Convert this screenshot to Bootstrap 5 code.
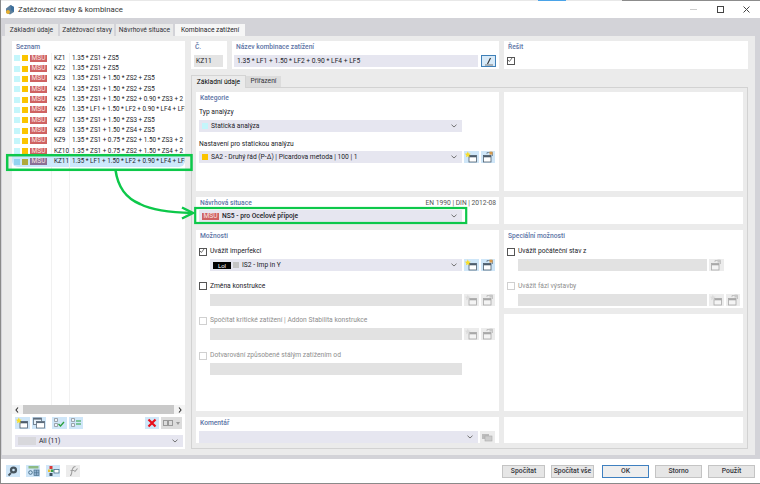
<!DOCTYPE html>
<html lang="cs">
<head>
  <meta charset="UTF-8" />
  <meta name="viewport" content="width=device-width, initial-scale=1.0" />
  <title>Zatěžovací stavy &amp; kombinace</title>
  <link href="https://cdn.jsdelivr.net/npm/bootstrap@5.3.3/dist/css/bootstrap.min.css" rel="stylesheet" />
  <style>
    html, body { margin: 0; background: #fff; overflow: hidden; }
    body, .list-group-item, .nav-link, .btn { font-family: Roboto, "Noto Sans", sans-serif; font-size: 6.7px; line-height: 9px; color: #222228; }
    .app { position: relative; width: 760px; height: 484px; overflow: hidden; border-left: 1px solid #8a8a8a; border-bottom: 1px solid #8a8a8a; }
    .top-strip { height: 1px; }
    .top-strip span:nth-child(1) { width: 537px; background: #e8e8e8; }
    .top-strip span:nth-child(2) { width: 28px; background: #4aa3e8; }
    .top-strip span:nth-child(3) { width: 56px; background: #e8e8e8; }
    .top-strip span:nth-child(4) { flex: 1; background: #8c8c8c; }
    .title-bar { height: 17px; padding-left: 4px; font-size: 7.8px; color: #333; }
    .title-bar > svg { margin-right: 3px; }
    .win-btns { margin-left: auto; }
    .win-btns svg { display: block; }
    .win-btns span { width: 26.5px; display: flex; justify-content: center; }
    .work { height: 441px; background: #d3d3d8; padding-top: 6px; }
    .nav.main-tabs { height: 12px; padding-left: 4px; gap: 2px; border: 0; flex-wrap: nowrap; }
    .main-tabs .nav-link, .sub-tabs .nav-link { height: 12px; padding: 0; margin: 0; border: 0; border-radius: 0; background: #e9e9e9; color: #33333a; text-align: center; font-size: 6.7px; line-height: 12px; }
    .main-tabs .nav-link.active { background: #f6f6f6; color: #26262c; }
    .t1 { width: 53px; } .t2 { width: 54px; } .t3 { width: 57px; } .t4 { width: 70px; }
    .tab-body { height: 419px; width: 753px; margin-left: 1px; background: #ebebeb; padding: 5px 7px 0 10px; gap: 6px; }
    .pane { background: #fff; }
    .caption { color: #5d74a6; font-weight: 500; padding: 2px 0 0 3px; height: 12px; }
    .left-pane { width: 173px; height: 408px; }
    .left-pane .caption { height: 12px; padding-left: 3px; }
    .list-area { position: relative; height: 352px; overflow: hidden; }
    .list-area::before, .list-area::after { content: ""; position: absolute; top: 0; bottom: 0; width: 1px; background: #f1f1f1; }
    .list-area::before { left: 39px; }
    .list-area::after { left: 57px; }
    .list-group-item { display: flex; align-items: center; height: 10.35px; padding: 0 0 0 2px; border: 0; border-radius: 0; background: transparent; white-space: nowrap; overflow: hidden; }
    .list-group-item.picked { background: #cde8fc; }
    .sq { width: 6px; height: 6px; flex: none; margin-right: 2px; }
    .sq-cyan { background: #c4f6fb; }
    .sq-yellow { background: #fbc400; }
    .sq-gray { background: #c4c4c4; }
    .msu { flex: none; width: 17px; height: 7px; background: #cf6262; color: #f8e4e4; font-size: 6.6px; line-height: 7px; text-align: center; }
    .picked .sq-cyan { background: #92d3f0; }
    .picked .sq-yellow { background: #aeaa3b; }
    .picked .msu { background: #8a6f96; }
    .kz { width: 17px; margin-left: 7px; flex: none; font-size: 6.4px; }
    .formula { margin-left: 1px; font-size: 6.3px; }
    .scroll-row { height: 9px; background: #f4f4f4; padding: 0 3px; }
    .scroll-row i { flex: 1; height: 9px; background: #c9c9c9; margin: 0 4px; }
    .tools { padding: 3px 3px 0 3px; height: 17px; gap: 2px; }
    .tools .gap-a { margin-left: 4px; }
    .tools .gap-b { margin-left: auto; }
    .ib { width: 14.5px; height: 12px; flex: none; background: #cfe6f8; display: flex; align-items: center; justify-content: center; color: #4c5c6c; --star: #f8de2a; --corner: #d89a4a; --body: #fff; }
    .ib.off { background: #ececec; color: #a8a8a8; --star: #dcdcdc; --corner: #c8c8c8; --body: #f4f4f4; }
    .ib.wide { width: 21px; background: #dcdcdc; gap: 3px; }
    .all-row { margin: 4px 2px 0 3px; }
    .fld { height: 12px; background: #e6e6f0; display: flex; align-items: center; padding-left: 3px; flex: none; color: #222228; position: relative; }
    .fld .chev { position: absolute; right: 5px; top: 4px; }
    .fld.off { background: #e2e2e2; }
    .all-box { width: 18px; height: 8px; background: #d8d8dc; margin-right: 3px; }
    .right-col { width: 557px; }
    .head-row { gap: 5px; height: 28px; margin-bottom: 6px; }
    .nr { width: 36px; } .nm { width: 267px; } .rs { width: 244px; }
    .nr .fld { width: 29px; margin-left: 3px; background: #e4e4e4; padding-left: 2px; }
    .nm .fld { width: 244px; margin-left: 2px; padding-left: 3px; }
    .field-row { display: flex; gap: 2px; margin-top: 2px; }
    .edit-btn { width: 15px; height: 12px; background: #d8eaf8; border: 1px solid #3f80b8; display: flex; align-items: center; justify-content: center; margin-left: 1px; }
    .nav.sub-tabs { height: 12px; border: 0; flex-wrap: nowrap; }
    .sub-tabs .nav-link { background: #dcdcdc; height: 11px; margin-top: 1px; line-height: 11px; width: 35px; }
    .sub-tabs .nav-link.active { background: #ebebeb; height: 13px; margin-top: 0; width: 55px; line-height: 12px; border: 1px solid #d4d4d4; border-bottom: 0; }
    .sub-body { height: 362px; border: 1px solid #d2d2d2; padding: 4px; gap: 5px; }
    .col-l { width: 303px; gap: 6px; }
    .col-r { width: 239px; gap: 6px; }
    .h99 { height: 99px; } .h27 { height: 27px; } .h181 { height: 181px; } .h26 { height: 26px; }
    .h78 { height: 78px; } .h97 { height: 97px; }
    .pane .caption { padding-left: 4px; }
    .lbl { padding-left: 3px; height: 9px; }
    .w263 { width: 263px; margin-left: 3px; }
    .w252 { width: 252px; }
    .w189 { width: 189px; }
    .w279 { width: 279px; margin-left: 3px; }
    .sp-a { margin-top: 4px; }
    .sp-b { margin-top: 8px; }
    .type-box { margin-top: 3px; }
    .sit-box { border-bottom: 1px solid #7b6fb0; height: 13px; padding-left: 3px; margin-top: 1px; }
    .sit-box .msu { margin-right: 3px; }
    .sit-box .msu + span { font-weight: 500; }
    .norm { margin-left: auto; padding: 2px 3px 0 0; color: #555; }
    .chk { width: 8px; height: 8px; border: 1px solid #555; background: #fff; flex: none; display: block; }
    .chk svg { display: block; }
    .chk.off { border-color: #d0d0d0; }
    .opt { display: flex; align-items: center; height: 9px; padding-left: 3px; gap: 3px; }
    .opt.dim { color: #8e8e8e; }
    .opt-fields { display: flex; gap: 2px; padding-left: 14px; margin-top: 3px; }
    .block { height: 34.7px; }
    .blocks { margin-top: 5px; }
    .lol { width: 18px; height: 7px; background: #000; color: #fff; font-size: 6px; line-height: 7px; text-align: center; margin-right: 2px; }
    .fld .sq { margin-right: 3px; }
    .solve { padding: 4px 0 0 3px; }
    .foot { height: 24px; background: #fff; padding: 6px 5px 0 5px; gap: 6px; }
    .foot .ib { width: 14px; }
    .foot .acts { margin-left: auto; gap: 6px; }
    .btn.act { height: 13px; padding: 0; border: 1px solid #c4c4c4; border-radius: 0; background: #e6e6e6; color: #33333a; font-size: 6.8px; line-height: 11px; font-weight: 500; }
    .btn.act.w42 { width: 43px; }
    .btn.act.w47 { width: 47px; }
    .btn.act.okb { border: 1px solid #3f80c0; background: #eeeeee; margin-left: 2px; }
    .overlay { position: absolute; left: -1px; top: 0; pointer-events: none; }
  </style>
</head>
<body>
  <svg width="0" height="0" class="d-block position-absolute">
    <symbol id="i-new" viewBox="0 0 14 12">
      <rect x="5" y="4.500" width="7.500" height="6.500" fill="var(--body)" stroke="currentColor" stroke-width=".8"/>
      <rect x="5" y="4.500" width="7.500" height="1.800" fill="currentColor"/>
      <path d="M3.800 .6l.9 1.900 2 .3-1.500 1.400.4 2-1.800-1-1.800 1 .4-2L.9 2.800l2-.3z" fill="var(--star)"/>
    </symbol>
    <symbol id="i-edit" viewBox="0 0 14 12">
      <rect x="2.500" y="4.500" width="7.500" height="6.500" fill="var(--body)" stroke="currentColor" stroke-width=".8"/>
      <rect x="2.500" y="4.500" width="7.500" height="1.800" fill="currentColor"/>
      <path d="M6 3V1.500h5.500V5" fill="none" stroke="currentColor" stroke-width=".6"/>
      <rect x="8.500" y=".6" width="3" height="3" fill="var(--corner)"/>
    </symbol>
    <symbol id="i-copy" viewBox="0 0 14 12">
      <rect x="1.500" y="1" width="8" height="6.500" fill="#e8f2fa" stroke="#5c6c7c" stroke-width=".8"/>
      <rect x="1.500" y="1" width="8" height="1.600" fill="#5c6c7c"/>
      <rect x="4.500" y="4.500" width="8" height="6.500" fill="#fff" stroke="#5c6c7c" stroke-width=".8"/>
      <rect x="4.500" y="4.500" width="8" height="1.600" fill="#5c6c7c"/>
    </symbol>
    <symbol id="i-chev" viewBox="0 0 6 4">
      <path d="M.5 .7L3 3l2.500-2.300" fill="none" stroke="#666" stroke-width=".9"/>
    </symbol>
    <symbol id="i-tick" viewBox="0 0 8 8">
      <path d="M1.300 3.800L3.200 6 6.800 1.200" fill="none" stroke="#444" stroke-width="1"/>
    </symbol>
  </svg>

  <div class="app d-flex flex-column">
    <div class="top-strip d-flex"><span></span><span></span><span></span><span></span></div>
    <div class="title-bar d-flex align-items-center">
      <svg width="10" height="11" viewBox="0 0 10 11">
        <path d="M1 4.500L5.500 1 9 3v5l-4 2.500-4-2z" fill="#5d7f9c"/>
        <path d="M5.500 1L9 3v5L6 6z" fill="#3c6f9c"/>
        <circle cx="3" cy="8" r="2" fill="#e8b030"/>
      </svg>
      <span>Zatěžovací stavy &amp; kombinace</span>
      <div class="win-btns d-flex align-items-center">
        <span><svg width="7" height="7" viewBox="0 0 7 7"><path d="M0 3.500h7" stroke="#ccc"/></svg></span>
        <span><svg width="7" height="7" viewBox="0 0 7 7"><rect x=".5" y=".5" width="6" height="6" fill="none" stroke="#444"/></svg></span>
        <span><svg width="7" height="7" viewBox="0 0 7 7"><path d="M.5 .5l6 6M6.500 .5l-6 6" stroke="#444"/></svg></span>
      </div>
    </div>

    <div class="work">
      <ul class="nav nav-tabs main-tabs">
        <li class="nav-item"><a class="nav-link t1" href="#">Základní údaje</a></li>
        <li class="nav-item"><a class="nav-link t2" href="#">Zatěžovací stavy</a></li>
        <li class="nav-item"><a class="nav-link t3" href="#">Návrhové situace</a></li>
        <li class="nav-item"><a class="nav-link t4 active" href="#">Kombinace zatížení</a></li>
      </ul>
      <div class="tab-body d-flex">
        <div class="pane left-pane d-flex flex-column">
          <div class="caption">Seznam</div>
          <div class="list-area"><ul class="list-group" id="comboList"></ul></div>
          <div class="scroll-row d-flex align-items-center">
            <svg width="4" height="6" viewBox="0 0 4 6"><path d="M3 .5L1 3l2 2.500" fill="none" stroke="#333" stroke-width="1.100"/></svg>
            <i></i>
            <svg width="4" height="6" viewBox="0 0 4 6"><path d="M1 .5L3 3 1 5.500" fill="none" stroke="#333" stroke-width="1.100"/></svg>
          </div>
          <div class="tools d-flex">
            <span class="ib"><svg width="14" height="12"><use href="#i-new"/></svg></span>
            <span class="ib"><svg width="14" height="12"><use href="#i-copy"/></svg></span>
            <span class="ib gap-a">
              <svg width="14" height="12" viewBox="0 0 14 12"><path d="M2.500 1.500h3v3h-3zM2.500 6.500h3v3h-3z" fill="#eef4f8" stroke="#8a929a" stroke-width=".8"/><path d="M6.500 7l2 2 3.500-4" fill="none" stroke="#2aa03c" stroke-width="1.300"/></svg>
            </span>
            <span class="ib">
              <svg width="14" height="12" viewBox="0 0 14 12"><path d="M2.500 1.500h3v3h-3zM2.500 6.500h3v3h-3z" fill="#eef4f8" stroke="#8a929a" stroke-width=".8"/><path d="M7 4h5M7 7h5" stroke="#2aa03c" stroke-width="1.200"/></svg>
            </span>
            <span class="ib gap-b">
              <svg width="10" height="10" viewBox="0 0 10 10"><path d="M1.500 1.500l7 7M8.500 1.500l-7 7" stroke="#e8101c" stroke-width="2.200"/></svg>
            </span>
            <span class="ib wide">
              <svg width="10" height="6" viewBox="0 0 10 6"><rect x=".5" y=".5" width="4" height="5" fill="none" stroke="#999"/><rect x="5.500" y=".5" width="4" height="5" fill="none" stroke="#999"/></svg>
              <svg width="4" height="3" viewBox="0 0 4 3"><path d="M0 0h4L2 3z" fill="#999"/></svg>
            </span>
          </div>
          <div class="fld all-row">
            <span class="all-box"></span><span>All (11)</span>
            <svg class="chev" width="6" height="4"><use href="#i-chev"/></svg>
          </div>
        </div>

        <div class="right-col">
          <div class="head-row d-flex">
            <div class="pane nr">
              <div class="caption">Č.</div>
              <div class="field-row"><div class="fld">KZ11</div></div>
            </div>
            <div class="pane nm">
              <div class="caption">Název kombinace zatížení</div>
              <div class="field-row">
                <div class="fld">1.35 * LF1 + 1.50 * LF2 + 0.90 * LF4 + LF5</div>
                <span class="edit-btn"><svg width="10" height="9" viewBox="0 0 10 9"><path d="M1 8h8" stroke="#777"/><path d="M3.500 7L6.500 1" stroke="#333" stroke-width="1.100"/></svg></span>
              </div>
            </div>
            <div class="pane rs">
              <div class="caption">Řešit</div>
              <div class="solve"><span class="chk"><svg width="6" height="6" viewBox="1 1 6 6"><use href="#i-tick"/></svg></span></div>
            </div>
          </div>

          <ul class="nav nav-tabs sub-tabs">
            <li class="nav-item"><a class="nav-link active" href="#">Základní údaje</a></li>
            <li class="nav-item"><a class="nav-link" href="#">Přiřazení</a></li>
          </ul>
          <div class="sub-body d-flex">
            <div class="col-l d-flex flex-column">
              <div class="pane h99">
                <div class="caption">Kategorie</div>
                <div class="lbl sp-a">Typ analýzy</div>
                <div class="fld w263 type-box"><span class="sq sq-cyan"></span>Statická analýza<svg class="chev" width="6" height="4"><use href="#i-chev"/></svg></div>
                <div class="lbl sp-b">Nastavení pro statickou analýzu</div>
                <div class="field-row">
                  <div class="fld w263"><span class="sq sq-yellow"></span>SA2 - Druhý řád (P-Δ) | Picardova metoda | 100 | 1<svg class="chev" width="6" height="4"><use href="#i-chev"/></svg></div>
                  <span class="ib"><svg width="14" height="12"><use href="#i-new"/></svg></span>
                  <span class="ib"><svg width="14" height="12"><use href="#i-edit"/></svg></span>
                </div>
              </div>
              <div class="pane h27 d-flex flex-column">
                <div class="d-flex">
                  <div class="caption">Návrhová situace</div>
                  <div class="norm">EN 1990 | DIN | 2012-08</div>
                </div>
                <div class="fld w263 sit-box"><span class="msu">MSÚ</span><span>NS5 - pro Ocelové přípoje</span><svg class="chev" width="6" height="4"><use href="#i-chev"/></svg></div>
              </div>
              <div class="pane h181">
                <div class="caption">Možnosti</div>
                <div class="blocks">
                  <div class="block">
                    <div class="opt"><span class="chk"><svg width="6" height="6" viewBox="1 1 6 6"><use href="#i-tick"/></svg></span>Uvážit imperfekci</div>
                    <div class="opt-fields">
                      <div class="fld w252"><span class="lol">Lol</span><span class="sq sq-gray"></span>IS2 - Imp in Y<svg class="chev" width="6" height="4"><use href="#i-chev"/></svg></div>
                      <span class="ib"><svg width="14" height="12"><use href="#i-new"/></svg></span>
                      <span class="ib"><svg width="14" height="12"><use href="#i-edit"/></svg></span>
                    </div>
                  </div>
                  <div class="block">
                    <div class="opt"><span class="chk"></span>Změna konstrukce</div>
                    <div class="opt-fields">
                      <div class="fld off w252"></div>
                      <span class="ib off"><svg width="14" height="12"><use href="#i-new"/></svg></span>
                      <span class="ib off"><svg width="14" height="12"><use href="#i-edit"/></svg></span>
                    </div>
                  </div>
                  <div class="block">
                    <div class="opt dim"><span class="chk off"></span>Spočítat kritické zatížení | Addon Stabilita konstrukce</div>
                    <div class="opt-fields">
                      <div class="fld off w252"></div>
                      <span class="ib off"><svg width="14" height="12"><use href="#i-new"/></svg></span>
                      <span class="ib off"><svg width="14" height="12"><use href="#i-edit"/></svg></span>
                    </div>
                  </div>
                  <div class="block">
                    <div class="opt dim"><span class="chk off"></span>Dotvarování způsobené stálým zatížením od</div>
                    <div class="opt-fields"><div class="fld off w252"></div></div>
                  </div>
                </div>
              </div>
              <div class="pane h26">
                <div class="caption">Komentář</div>
                <div class="field-row">
                  <div class="fld w279"><svg class="chev" width="6" height="4"><use href="#i-chev"/></svg></div>
                  <span class="ib off"><svg width="14" height="12" viewBox="0 0 14 12"><rect x="2" y="3" width="7" height="5" fill="#bbb"/><rect x="5" y="5" width="7" height="5" fill="#ccc" stroke="#aaa" stroke-width=".6"/></svg></span>
                </div>
              </div>
            </div>

            <div class="col-r d-flex flex-column">
              <div class="pane h99"></div>
              <div class="pane h27"></div>
              <div class="pane h78">
                <div class="caption">Speciální možnosti</div>
                <div class="blocks">
                  <div class="block">
                    <div class="opt"><span class="chk"></span>Uvážit počáteční stav z</div>
                    <div class="opt-fields">
                      <div class="fld off w189"></div>
                      <span class="ib off"><svg width="14" height="12"><use href="#i-edit"/></svg></span>
                    </div>
                  </div>
                  <div class="block">
                    <div class="opt dim"><span class="chk off"></span>Uvážit fázi výstavby</div>
                    <div class="opt-fields">
                      <div class="fld off w189"></div>
                      <span class="ib off"><svg width="14" height="12"><use href="#i-new"/></svg></span>
                      <span class="ib off"><svg width="14" height="12"><use href="#i-edit"/></svg></span>
                    </div>
                  </div>
                </div>
              </div>
              <div class="pane h97"></div>
              <div class="pane h26"></div>
            </div>
          </div>
        </div>
      </div>
    </div>

    <div class="foot d-flex">
      <span class="ib">
        <svg width="12" height="12" viewBox="0 0 12 12"><circle cx="6.500" cy="5" r="3.600" fill="#46545e"/><circle cx="6.500" cy="5" r="1.300" fill="#cfe6f8"/><path d="M4 8l-2.500 2.500" stroke="#46545e" stroke-width="1.800"/></svg>
      </span>
      <span class="ib">
        <svg width="13" height="12" viewBox="0 0 13 12"><rect x="1.500" y="1" width="10" height="2.500" fill="#8cba84"/><circle cx="3.500" cy="7.500" r="1.800" fill="none" stroke="#48708c"/><rect x="7" y="5" width="5" height="5.500" fill="#8fb0d0" stroke="#48708c" stroke-width=".7"/><path d="M9.500 5v5.500M7 7.700h5" stroke="#48708c" stroke-width=".6"/></svg>
      </span>
      <span class="ib">
        <svg width="13" height="12" viewBox="0 0 13 12"><rect x="2.500" y="1" width="3" height="3" fill="#d83a3a"/><rect x="1" y="4.500" width="2.500" height="2.500" fill="#e8c030"/><rect x="4" y="4.500" width="2.500" height="2.500" fill="#3aa04a"/><rect x="2.500" y="8" width="3" height="3" fill="#3c5060"/><rect x="7" y="4.500" width="5" height="3.500" fill="#fff" stroke="#48708c" stroke-width=".8"/></svg>
      </span>
      <span class="ib off">
        <svg width="13" height="12" viewBox="0 0 13 12"><path d="M3 10.500c2 0 1.500-3 2-5S6 1.500 8.500 1.500M3.500 5.500h4M7.500 7l3-3.500" fill="none" stroke="#a0a0a0" stroke-width="1.100"/></svg>
      </span>
      <div class="acts d-flex">
        <button class="btn act w42" type="button">Spočítat</button>
        <button class="btn act w42" type="button">Spočítat vše</button>
        <button class="btn act w47 okb" type="button">OK</button>
        <button class="btn act w47" type="button">Storno</button>
        <button class="btn act w47" type="button">Použít</button>
      </div>
    </div>

    <svg class="overlay" width="760" height="484" viewBox="0 0 760 484">
      <g fill="none" stroke="#0dc84a">
        <rect x="7.200" y="155.200" width="184.300" height="14.600" stroke-width="2.500"/>
        <path d="M115.500 170C118 188 126 198 140 204 152 210 170 212.500 192 213" stroke-width="2.500"/>
        <path d="M182 207.500l11 5.500-11 5.500" stroke-width="2.500"/>
        <rect x="195.200" y="208" width="271" height="15" stroke-width="2.200"/>
      </g>
    </svg>
  </div>

  <script>
    const rows = [
      ["KZ1", "1.35 * ZS1 + ZS5"],
      ["KZ2", "1.35 * ZS1 + ZS5"],
      ["KZ3", "1.35 * ZS1 + 1.50 * ZS2 + ZS5"],
      ["KZ4", "1.35 * ZS1 + 1.50 * ZS2 + ZS5"],
      ["KZ5", "1.35 * ZS1 + 1.50 * ZS2 + 0.90 * ZS3 + 2"],
      ["KZ6", "1.35 * LF1 + 1.50 * LF2 + 0.90 * LF4 + LF5"],
      ["KZ7", "1.35 * ZS1 + 1.50 * ZS3 + ZS5"],
      ["KZ8", "1.35 * ZS1 + 1.50 * ZS4 + ZS5"],
      ["KZ9", "1.35 * ZS1 + 0.75 * ZS2 + 1.50 * ZS3 + 2"],
      ["KZ10", "1.35 * ZS1 + 0.75 * ZS2 + 1.50 * ZS4 + 2"],
      ["KZ11", "1.35 * LF1 + 1.50 * LF2 + 0.90 * LF4 + LF5"]
    ];
    const list = document.getElementById("comboList");
    rows.forEach((r, i) => {
      const li = document.createElement("li");
      li.className = "list-group-item" + (i === rows.length - 1 ? " picked" : "");
      li.innerHTML = `<span class="sq sq-cyan"></span><span class="sq sq-yellow"></span><span class="msu">MSÚ</span><span class="kz">${r[0]}</span><span class="formula">${r[1]}</span>`;
      list.appendChild(li);
    });
  </script>
</body>
</html>
